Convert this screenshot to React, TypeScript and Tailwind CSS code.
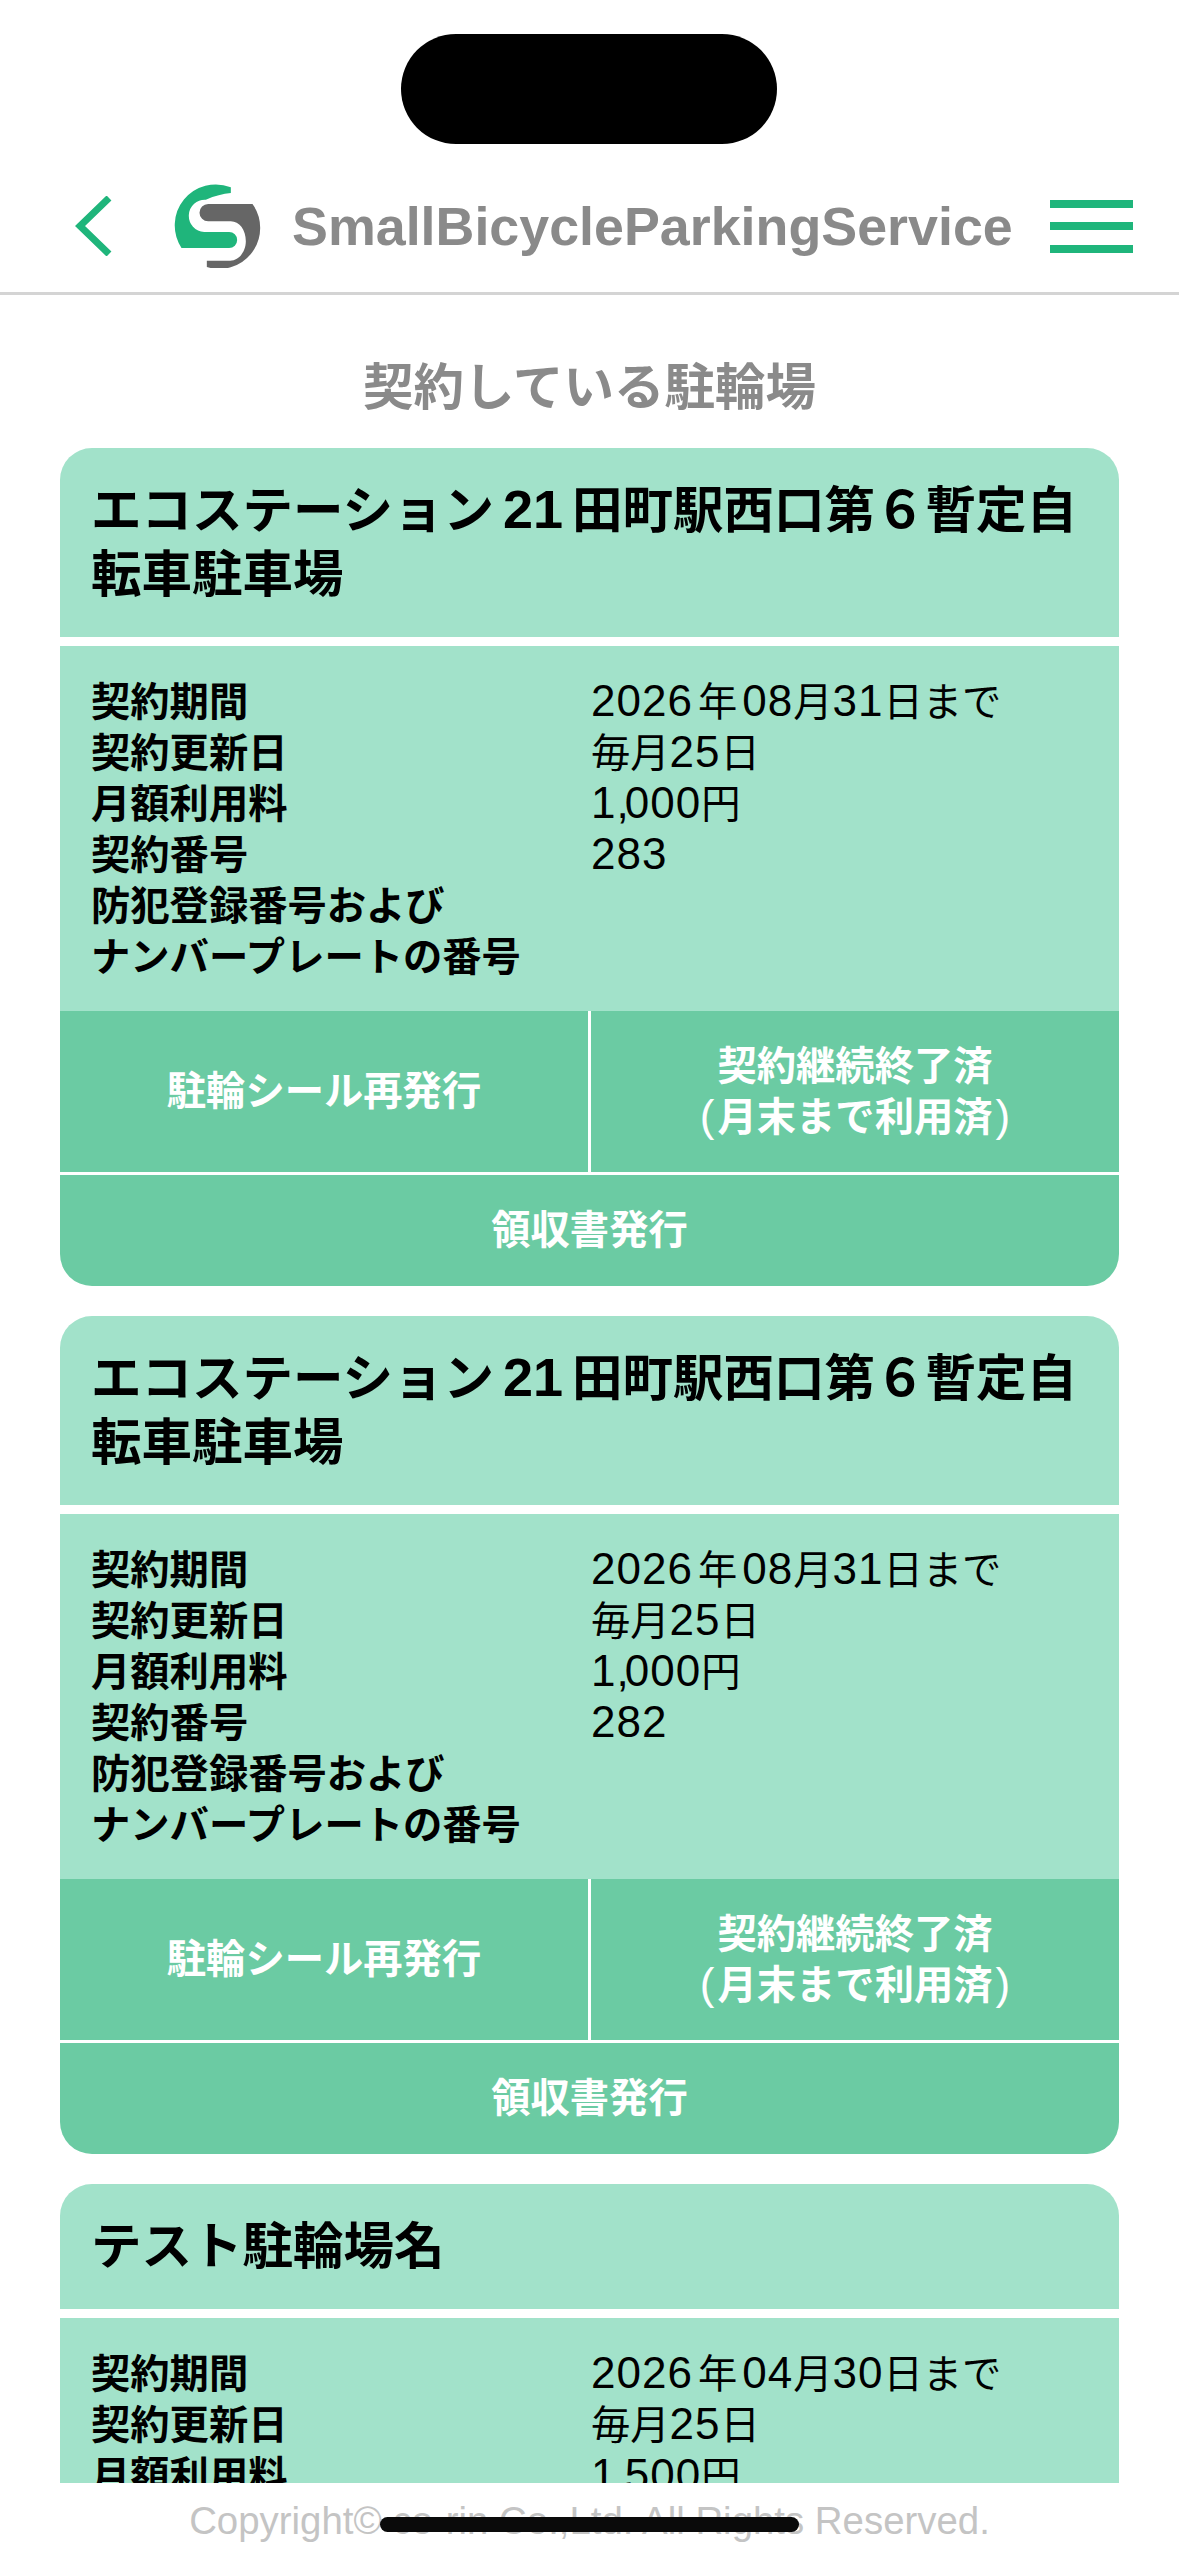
const font = { fontFamily: '"Liberation Sans","Noto Sans CJK JP",sans-serif' };

function Val({ text }: { text: string }) {
  const parts = text.split(/(\d+|,)/);
  return (
    <>
      {parts.map((p, i) =>
        /^\d+$/.test(p) ? (
          <span key={i} className="text-[44px] leading-[50px] tracking-[1px]">{p}</span>
        ) : p === ',' ? (
          <span key={i} className="text-[44px] leading-[50px] tracking-[-4px]">{p}</span>
        ) : (
          <span key={i}>{p}</span>
        ),
      )}
    </>
  );
}

function Card({ title, date, fee, no, cut }: { title: React.ReactNode; date: React.ReactNode; fee: string; no: string; cut?: boolean }) {
  const rows: [string, React.ReactNode][] = [
    ['契約期間', date],
    ['契約更新日', <Val text="毎月25日" />],
    ['月額利用料', <Val text={fee} />],
    ['契約番号', <Val text={no} />],
    ['防犯登録番号および', ''],
    ['ナンバープレートの番号', ''],
  ];
  return (
    <section className="mx-[60px] mb-[30px] shrink-0 overflow-hidden rounded-[32px] text-black">
      <h2 className="bg-[#a2e2ca] px-[31px] pt-[31px] pb-[30px] text-[50.5px] leading-[64px] font-bold">{title}</h2>
      <div className="mt-[9px] bg-[#a2e2ca] pt-[30px] pr-[31px] pb-[29px] pl-[31px]">
        {rows.map(([k, v], i) => (
          <div key={i} className="flex h-[51px] items-center text-[39.3px] leading-[50px]">
            <div className="w-[500px] font-bold whitespace-nowrap">{k}</div>
            <div className="whitespace-nowrap">{v}</div>
          </div>
        ))}
      </div>
      {!cut && (
        <>
          <div className="flex h-[161px] bg-[#6bcba3] text-center text-[39.3px] leading-[51px] font-bold text-white">
            <div className="flex flex-1 items-center justify-center border-r-[3px] border-white">駐輪シール再発行</div>
            <div className="flex flex-1 items-center justify-center">
              <div>
                契約継続終了済
                <br />
                <span className="mr-[3px] text-[44px] leading-[40px] font-normal">(</span>月末まで利用済<span className="ml-[3px] text-[44px] leading-[40px] font-normal">)</span>
              </div>
            </div>
          </div>
          <div className="mt-[3px] flex h-[111px] items-center justify-center bg-[#6bcba3] text-[39.3px] font-bold text-white">領収書発行</div>
        </>
      )}
    </section>
  );
}

const Date1 = <><span className="text-[44px] leading-[50px] tracking-[1px]">2026</span><span className="mx-[5px]">年</span><Val text="08月31日まで" /></>;
const Date2 = <><span className="text-[44px] leading-[50px] tracking-[1px]">2026</span><span className="mx-[5px]">年</span><Val text="04月30日まで" /></>;
const LongTitle = <>エコステーション<span className="mx-[9px] text-[54px] leading-[40px]">21</span>田町駅西口第６暫定自転車駐車場</>;

export default function App() {
  return (
    <div style={font} className="relative flex h-[2556px] w-[1179px] flex-col overflow-hidden bg-white">
      <div className="absolute top-[34px] left-[401px] h-[110px] w-[376px] rounded-[55px] bg-black" />
      <header className="flex h-[295px] shrink-0 items-end border-b-[3px] border-[#d4d4d4] pb-[24px]">
        <div className="flex h-[84px] w-full items-center">
          <svg className="ml-[75px] h-[60px] w-[37px]" viewBox="0 0 37 60" fill="none">
            <path d="M34 2 L5 30 L34 58" stroke="#1fb57b" strokeWidth="7" />
          </svg>
          <svg className="ml-[62px] h-[84px] w-[87px]" viewBox="70 73 260 252">
            <path fill="#1fb57b" d="M240 83 A123 123 0 0 0 92 265 L235 265 A24 24 0 0 0 235 217 L160 217 A48 48 0 0 1 165 120 Q205 103 240 100 Z" />
            <path fill="#666666" d="M172 133 L305 133 A123 123 0 0 1 168 322 L168 303 L238 303 C265 303 285 275 285 245 C285 210 265 185 240 185 L172 185 A26 26 0 0 1 172 133 Z" />
          </svg>
          <div className="ml-[31px] w-[718px] text-[53.8px] leading-[84px] font-bold whitespace-nowrap text-[#8a8a8a]">SmallBicycleParkingService</div>
          <div className="ml-[40px] flex h-[53px] w-[83px] flex-col justify-between">
            <div className="h-[8px] bg-[#1fb57b]" />
            <div className="h-[8px] bg-[#1fb57b]" />
            <div className="h-[8px] bg-[#1fb57b]" />
          </div>
        </div>
      </header>
      <main className="flex min-h-0 flex-1 flex-col overflow-hidden">
        <h1 className="shrink-0 pt-[63px] pb-[30px] text-center text-[50.5px] leading-[60px] font-bold text-[#8a8a8a]">契約している駐輪場</h1>
        <Card title={LongTitle} date={Date1} fee="1,000円" no="283" />
        <Card title={LongTitle} date={Date1} fee="1,000円" no="282" />
        <Card title="テスト駐輪場名" date={Date2} fee="1,500円" no="" cut />
      </main>
      <footer className="flex h-[73px] shrink-0 justify-center pt-[15px] text-[38.4px] leading-[46px] whitespace-nowrap text-[#c4c4c4]">Copyright© co-rin Co.,Ltd. All Rights Reserved.</footer>
      <div className="absolute top-[2517px] left-[380px] h-[15px] w-[419px] rounded-full bg-[#0a0a0a]" />
    </div>
  );
}
